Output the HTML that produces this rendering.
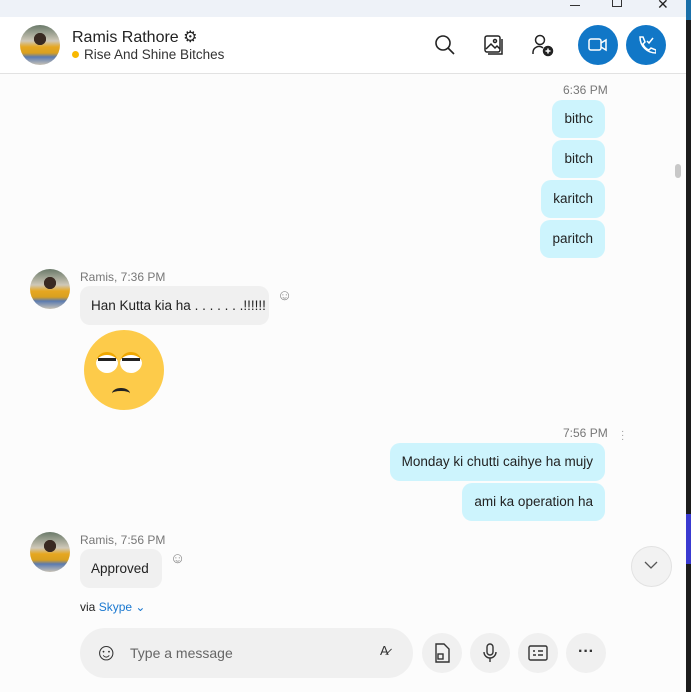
<!DOCTYPE html>
<html><head><style>
body{margin:0;width:691px;height:692px;overflow:hidden;background:#fff;font-family:"Liberation Sans",sans-serif;position:relative;color:#222}
.a{position:absolute}
.b{position:absolute;background:#cdf4fd;border-radius:10px;font-size:13.5px;line-height:38px;padding:0 12px;color:#222}
.g{position:absolute;background:#f0f0f0;border-radius:10px;font-size:13.5px;color:#222}
.t{position:absolute;font-size:12px;color:#777}
.av{position:absolute;width:40px;height:40px;border-radius:50%;background:radial-gradient(circle at 50% 35%,#3a2a22 0 18%,transparent 19%),linear-gradient(#6a7a6a,#cfc8b8 40%,#e6a720 55%,#d9a020 70%,#5a7ab0 80%,#c9c2b5);}
.cb{position:absolute;width:40px;height:40px;border-radius:50%;background:#f0f0f0}
</style></head><body>
<div class="a" style="left:0;top:0;width:686px;height:17px;background:#eef2f8"></div>
<div class="a" style="left:570px;top:5px;width:10px;height:1px;background:#333"></div>
<div class="a" style="left:612px;top:0;width:8px;height:6px;border:1px solid #333;border-top:none"></div>
<div class="a" style="left:657px;top:-4px;font-size:14px">✕</div>
<div class="a" style="left:686px;top:0;width:5px;height:692px;background:#1c1c1c"></div>
<div class="a" style="left:686px;top:0;width:5px;height:20px;background:#1a6fa8"></div>
<div class="a" style="left:686px;top:514px;width:5px;height:50px;background:#3a3ad0"></div>
<div class="a" style="left:0;top:73px;width:686px;height:1px;background:#e2e2e2"></div>
<div class="a" style="left:0;top:74px;width:686px;height:618px;background:#fcfcfc"></div>
<div class="av" style="left:20px;top:25px"></div>
<div class="a" style="left:72px;top:27px;font-size:16px;color:#222">Ramis Rathore <span style="font-size:16px">⚙</span></div>
<div class="a" style="left:72px;top:51px;width:7px;height:7px;border-radius:50%;background:#f8b800"></div>
<div class="a" style="left:84px;top:47px;font-size:13.5px;color:#333">Rise And Shine Bitches</div>
<svg class="a" style="left:434px;top:34px" width="22" height="22" fill="none" stroke="#222" stroke-width="1.6"><circle cx="9" cy="9" r="7"/><path d="M14 14l6 6"/></svg>
<svg class="a" style="left:483px;top:34px" width="22" height="22" fill="none" stroke="#222" stroke-width="1.5"><rect x="2" y="2" width="15" height="16" rx="2"/><path d="M5 20h14V5"/><path d="M3 15l5-5 4 4 2-2 3 3"/><circle cx="12" cy="7" r="1.5"/></svg>
<svg class="a" style="left:531px;top:33px" width="24" height="24" fill="none" stroke="#222" stroke-width="1.5"><circle cx="9" cy="7" r="4.5"/><path d="M2 21v-2a6 6 0 0 1 10-4"/><circle cx="17" cy="18" r="4.5" fill="#222"/><path d="M17 15.5v5M14.5 18h5" stroke="#fff"/></svg>
<div class="a" style="left:578px;top:25px;width:40px;height:40px;border-radius:50%;background:#1177c7"></div>
<svg class="a" style="left:588px;top:36px" width="20" height="18" fill="none" stroke="#fff" stroke-width="1.5"><rect x="1" y="3" width="12" height="11" rx="2"/><path d="M13 7l5-3v10l-5-3"/></svg>
<div class="a" style="left:626px;top:25px;width:40px;height:40px;border-radius:50%;background:#1177c7"></div>
<svg class="a" style="left:636px;top:35px" width="20" height="20" fill="none" stroke="#fff" stroke-width="1.5"><path d="M4 2l3 0 2 5-2 2c1 3 3 5 6 6l2-2 5 2v3c-9 0-16-7-16-16z"/><path d="M11 6l2 2 4-5"/></svg>
<div class="t" style="left:563px;top:83px">6:36 PM</div>
<div class="b" style="right:86px;top:100px">bithc</div>
<div class="b" style="right:86px;top:140px">bitch</div>
<div class="b" style="right:86px;top:180px">karitch</div>
<div class="b" style="right:86px;top:220px">paritch</div>
<div class="a" style="left:675px;top:164px;width:6px;height:14px;border-radius:3px;background:#c8c8c8"></div>
<div class="av" style="left:30px;top:269px"></div>
<div class="t" style="left:80px;top:270px">Ramis, 7:36 PM</div>
<div class="g" style="left:80px;top:286px;width:189px;height:39px;line-height:39px;text-indent:11px">Han Kutta kia ha . . . . . . .!!!!!!</div>
<div class="a" style="left:277px;top:287px;font-size:15px;color:#888">☺</div>
<div class="a" style="left:84px;top:330px;width:80px;height:80px;border-radius:50%;background:#fdcb4a"></div>
<div class="a" style="left:96px;top:352px;width:22px;height:18px;border-radius:50%;background:#fff;border-top:3px solid #f0a800;overflow:hidden"><div style="margin:3px 0 0 2px;width:18px;height:3px;background:#222"></div></div>
<div class="a" style="left:120px;top:352px;width:22px;height:18px;border-radius:50%;background:#fff;border-top:3px solid #f0a800;overflow:hidden"><div style="margin:3px 0 0 2px;width:18px;height:3px;background:#222"></div></div>
<div class="a" style="left:112px;top:388px;width:18px;height:8px;border-top:3px solid #222;border-radius:50% 50% 0 0"></div>
<div class="t" style="left:563px;top:426px">7:56 PM</div>
<div class="a" style="left:621px;top:430px;font-size:10px;color:#999;line-height:4px">·<br>·<br>·</div>
<div class="b" style="right:86px;top:443px">Monday ki chutti caihye ha mujy</div>
<div class="b" style="right:86px;top:483px">ami ka operation ha</div>
<div class="av" style="left:30px;top:532px"></div>
<div class="t" style="left:80px;top:533px">Ramis, 7:56 PM</div>
<div class="g" style="left:80px;top:549px;width:82px;height:39px;line-height:39px;text-indent:11px">Approved</div>
<div class="a" style="left:170px;top:550px;font-size:15px;color:#888">☺</div>
<div class="a" style="left:631px;top:546px;width:39px;height:39px;border-radius:50%;background:#f2f2f2;border:1px solid #e2e2e2"></div>
<svg class="a" style="left:643px;top:560px" width="16" height="10" fill="none" stroke="#555" stroke-width="1.3"><path d="M2 2l6 6 6-6"/></svg>
<div class="a" style="left:80px;top:600px;font-size:12px;color:#222">via <span style="color:#1a78d0">Skype ⌄</span></div>
<div class="a" style="left:80px;top:628px;width:333px;height:50px;border-radius:25px;background:#f0f0f0"></div>
<div class="a" style="left:94px;top:638px;font-size:24px;color:#333;line-height:30px">☺</div>
<div class="a" style="left:130px;top:645px;font-size:14px;color:#666">Type a message</div>
<div class="a" style="left:380px;top:643px;font-size:13px;color:#333">A̷</div>
<div class="cb" style="left:422px;top:633px"></div>
<div class="cb" style="left:470px;top:633px"></div>
<div class="cb" style="left:518px;top:633px"></div>
<div class="cb" style="left:566px;top:633px"></div>
<svg class="a" style="left:433px;top:643px" width="18" height="20" fill="none" stroke="#333" stroke-width="1.4"><path d="M3 1h8l5 5v13H3z"/><rect x="5" y="11" width="5" height="5"/></svg>
<svg class="a" style="left:482px;top:643px" width="16" height="20" fill="none" stroke="#333" stroke-width="1.4"><rect x="5" y="1" width="6" height="11" rx="3"/><path d="M2 9a6 6 0 0 0 12 0M8 15v4"/></svg>
<svg class="a" style="left:528px;top:644px" width="20" height="18" fill="none" stroke="#333" stroke-width="1.4"><rect x="1" y="2" width="18" height="14" rx="1.5"/><path d="M5 7h2M5 11h3M10 7h5M10 11h5"/></svg>
<div class="a" style="left:578px;top:643px;font-size:16px;color:#333;font-weight:bold">···</div>
</body></html>
